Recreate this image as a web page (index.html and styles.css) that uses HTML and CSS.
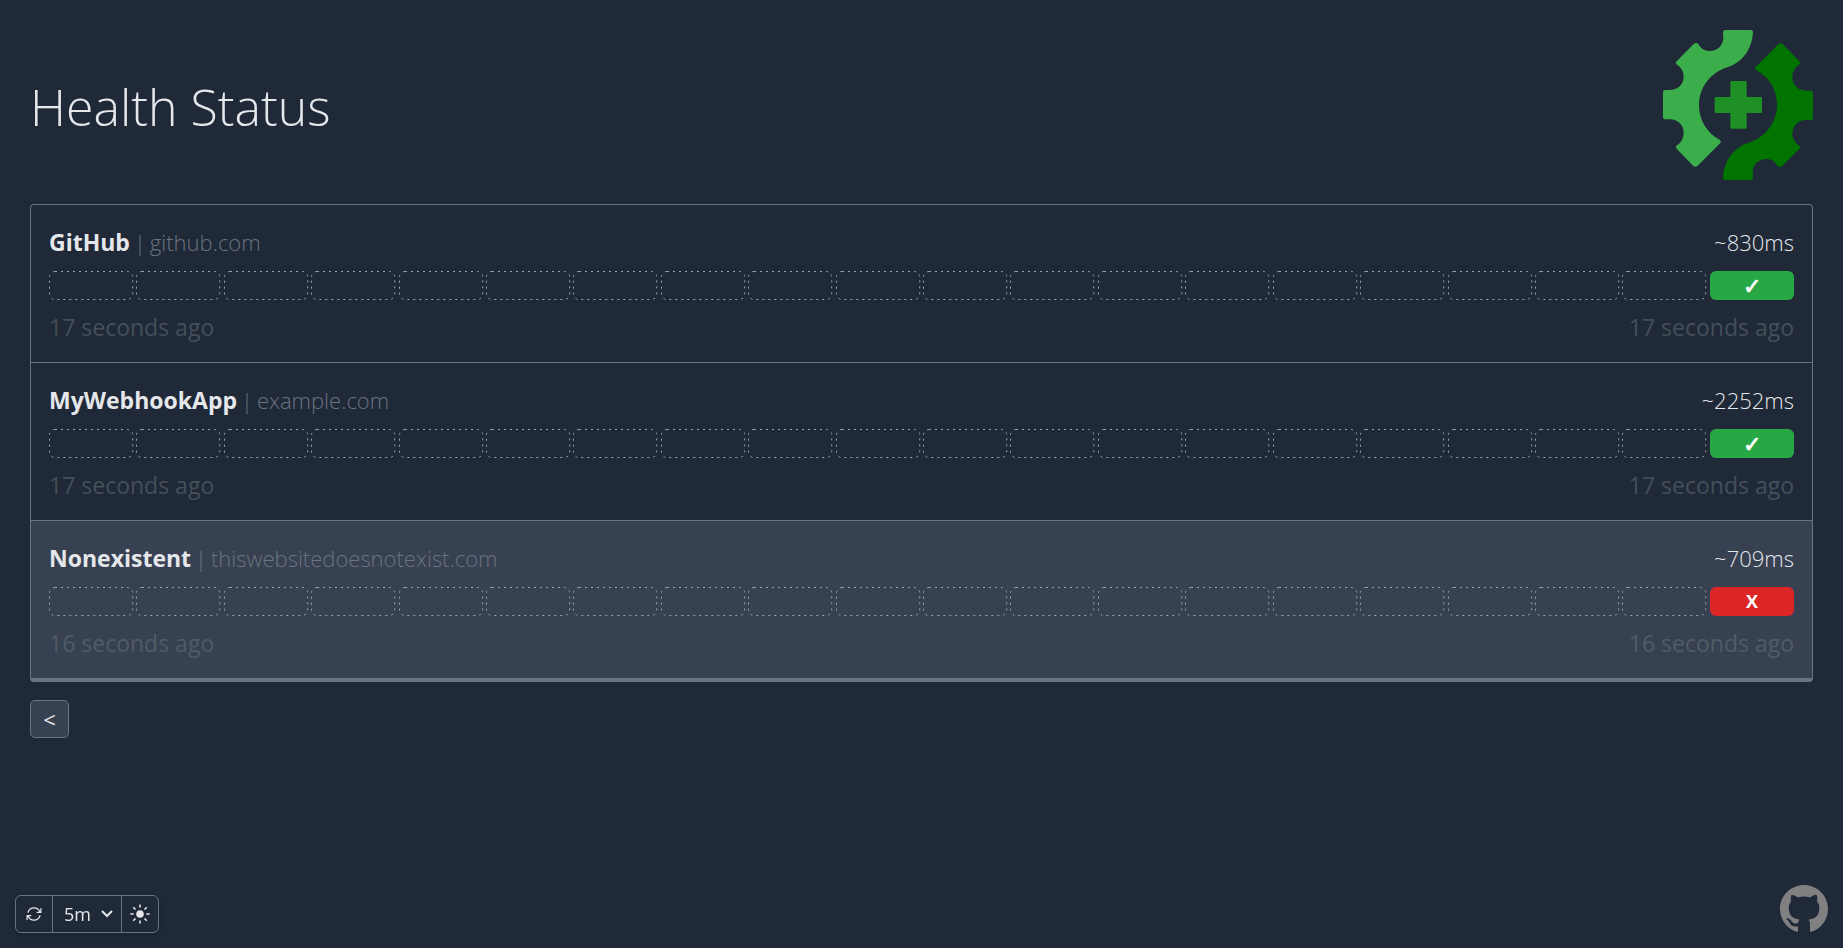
FILE: index.html
```html
<!DOCTYPE html>
<html lang="en">
<head>
<meta charset="utf-8">
<title>Health Status</title>
<link rel="stylesheet" href="styles.css">
</head>
<body>
<header class="header">
  <h1 class="title">Health Status</h1>
  <svg class="logo" viewBox="69 60 450 450" role="img" aria-label="Logo">
    <defs>
      <path id="half" d="M249 67Q249 60 257 60H331Q339 60 339 67C336 118 306 159 262 172C210 188 177 235 177 285C177 330 201 370 239 389Q245 393 241 399L173 467Q166 473 160 468L110 416Q105 410 111 406C124 398 131 383 131 368C131 345 113 328 90 328H76Q69 328 69 320V247Q69 240 77 240H90C113 240 131 222 131 200C131 186 124 172 111 164Q104 159 110 154L161 102Q167 96 175 101C181 115 194 123 210 123C232 123 250 106 250 84Z"/>
    </defs>
    <use href="#half" fill="#3cad4b"/>
    <use href="#half" fill="#017400" transform="rotate(180 294 285)"/>
    <path fill="#1e9025" d="M273 213H318L320 215V261H364L366 263V307L364 309H320V354L318 356H273L271 354V309H226L224 307V263L226 261H271V215Z"/>
  </svg>
</header>

<main>
  <section class="services" id="services"></section>
  <button class="pager" type="button" aria-label="Previous page">&lt;</button>
</main>

<div class="settings">
  <button class="tool" type="button" aria-label="Refresh">
    <svg width="16" height="16" viewBox="0 0 16 16" fill="none" stroke="currentColor" stroke-width="1.2" stroke-linecap="round" stroke-linejoin="round">
      <path d="M2 6.3A6.3 6.3 0 0 1 14 6.3M14.9 2.6V6.4H11.2M14 9.7A6.3 6.3 0 0 1 2 9.7M1.1 13.4V9.6H4.8"/>
    </svg>
  </button>
  <div class="interval">
    <select class="select" aria-label="Refresh interval"><option>5m</option></select>
    <svg class="chevron" width="12" height="8" viewBox="0 0 12 8" fill="none" stroke="currentColor" stroke-width="2"><path d="M1 1L6 6L11 1"/></svg>
  </div>
  <button class="tool" type="button" aria-label="Toggle theme">
    <svg width="20" height="20" viewBox="0 0 20 20" fill="none" stroke="currentColor" stroke-width="1.6">
      <circle cx="10" cy="10" r="3.8" fill="currentColor" stroke="none"/>
      <path d="M10 .4V3.6M10 16.4V19.6M.4 10H3.6M16.4 10H19.6M3.2 3.2L5.5 5.5M14.5 14.5L16.8 16.8M3.2 16.8L5.5 14.5M14.5 5.5L16.8 3.2"/>
    </svg>
  </button>
</div>

<a class="github" href="#" aria-label="GitHub">
  <svg viewBox="0 0 16 16" fill="currentColor"><path d="M8 0C3.58 0 0 3.58 0 8c0 3.54 2.29 6.53 5.47 7.59.4.07.55-.17.55-.38 0-.19-.01-.82-.01-1.49-2.01.37-2.53-.49-2.69-.94-.09-.23-.48-.94-.82-1.13-.28-.15-.68-.52-.01-.53.63-.01 1.08.58 1.23.82.72 1.21 1.87.87 2.33.66.07-.52.28-.87.51-1.07-1.78-.2-3.64-.89-3.64-3.95 0-.87.31-1.59.82-2.15-.08-.2-.36-1.02.08-2.12 0 0 .67-.21 2.2.82.64-.18 1.32-.27 2-.27s1.36.09 2 .27c1.53-1.04 2.2-.82 2.2-.82.44 1.1.16 1.92.08 2.12.51.56.82 1.27.82 2.15 0 3.07-1.87 3.75-3.65 3.95.29.25.54.73.54 1.48 0 1.07-.01 1.93-.01 2.2 0 .21.15.46.55.38A8.01 8.01 0 0 0 16 8c0-4.42-3.58-8-8-8z"/></svg>
</a>
<script src="app.js"></script>
</body>
</html>
```

FILE: styles.css
```css
* {
  box-sizing: border-box;
}

body {
  margin: 0;
  padding: 30px;
  min-height: 100vh;
  background: #1f2937;
  color: #e5e7eb;
  font-family: "Segoe UI", "Open Sans", "Noto Sans", sans-serif;
  font-size: 23px;
  line-height: 32px;
}

button,
select {
  font: inherit;
  color: inherit;
  margin: 0;
  padding: 0;
  cursor: pointer;
}

.header {
  display: flex;
  align-items: center;
  justify-content: space-between;
  margin-bottom: 24px;
}

.title {
  margin: 0;
  padding-top: 4px;
  font-size: 50px;
  line-height: 64px;
  font-weight: 300;
}

.logo {
  width: 150px;
  height: 150px;
}

.services {
  border: 1px solid #6b7280;
  border-bottom-width: 4px;
  border-radius: 4px;
  overflow: hidden;
}

.service {
  padding: 21px 18px 19px;
}

.service + .service {
  border-top: 1px solid #6b7280;
}

.service.failing {
  background: #374151;
}

.row {
  display: flex;
  justify-content: space-between;
}

.label {
  display: flex;
  align-items: baseline;
  gap: 4px;
}

.name {
  font-weight: 700;
}

.host {
  color: #6b7280;
  font-size: 22px;
  font-weight: 300;
}

.latency {
  font-size: 22px;
  font-weight: 300;
}

.bars {
  display: flex;
  gap: 3px;
  margin: 13px 0 11px;
}

.bar {
  flex: 1 1 0;
  height: 29px;
  border-radius: 6px;
  text-align: center;
  font-size: 18px;
  line-height: 29px;
  font-weight: 700;
  color: #fff;
}

.outline {
  display: block;
  width: 100%;
  height: 100%;
  padding: 1px;
  overflow: visible;
  fill: none;
  stroke: #9ca3af;
  stroke-dasharray: 2 4;
}

.bar.up {
  background: #28a745;
  font-size: 22px;
}

.bar.down {
  background: #dc2626;
}

.age {
  color: #6c757d;
  opacity: 0.5;
}

.pager {
  display: block;
  width: 39px;
  height: 38px;
  margin-top: 18px;
  border: 1px solid #6b7280;
  border-radius: 5px;
  background: #374151;
  font-size: 22px;
}

.settings {
  position: fixed;
  left: 15px;
  bottom: 15px;
  display: flex;
  height: 38px;
  border: 1px solid #6b7280;
  border-radius: 6px;
  box-shadow: 0 1px 4px rgba(0, 0, 0, 0.2);
}

.tool {
  display: flex;
  align-items: center;
  justify-content: center;
  width: 36px;
  border: 0;
  background: none;
}

.interval {
  display: grid;
  align-items: center;
  width: 70px;
  border: solid #6b7280;
  border-width: 0 1px;
}

.select {
  grid-area: 1 / 1;
  height: 36px;
  padding-left: 11px;
  border: 0;
  background: none;
  appearance: none;
  font-size: 18px;
}

.chevron {
  grid-area: 1 / 1;
  justify-self: end;
  margin-right: 8px;
  pointer-events: none;
}

.github {
  position: fixed;
  right: 15px;
  bottom: 15px;
  width: 48px;
  height: 48px;
  color: #808080;
}

.github svg {
  display: block;
}
```

FILE: app.js
```js
const services = [
  { name: "GitHub", host: "github.com", latency: "~830ms", age: "17 seconds ago", up: true },
  { name: "MyWebhookApp", host: "example.com", latency: "~2252ms", age: "17 seconds ago", up: true },
  { name: "Nonexistent", host: "thiswebsitedoesnotexist.com", latency: "~709ms", age: "16 seconds ago", up: false },
];

const emptyBars = '<div class="bar"><svg class="outline"><rect x="-.5" y="-.5" width="101%" height="28" rx="5.5"/></svg></div>'.repeat(19);

document.getElementById("services").innerHTML = services.map((s) => `
  <article class="service${s.up ? "" : " failing"}">
    <div class="row">
      <div class="label"><span class="name">${s.name}</span><span class="host">|</span><span class="host">${s.host}</span></div>
      <div class="latency">${s.latency}</div>
    </div>
    <div class="bars">${emptyBars}<div class="bar ${s.up ? "up" : "down"}">${s.up ? "✓" : "X"}</div></div>
    <div class="row age"><span>${s.age}</span><span>${s.age}</span></div>
  </article>`).join("");
```
